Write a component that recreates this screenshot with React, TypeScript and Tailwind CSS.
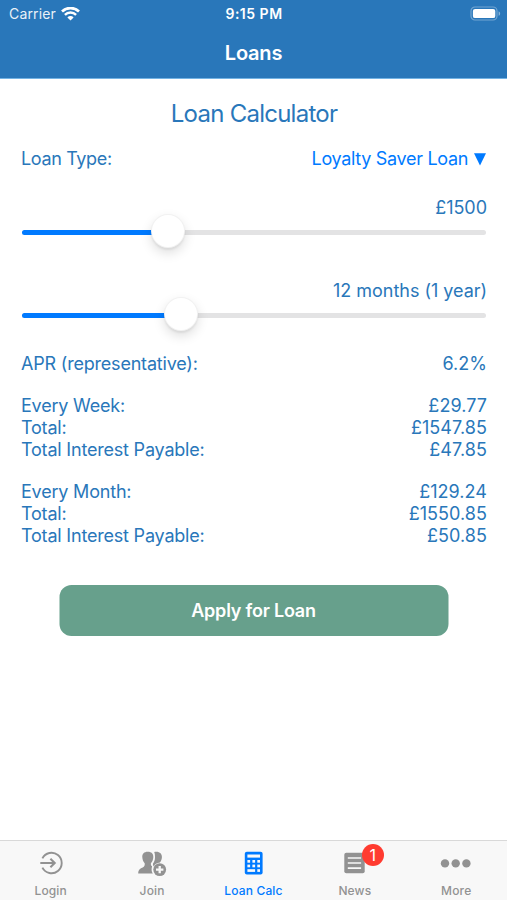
import * as React from 'react';

interface SliderProps {
    label: string;
    percent: number;
}

interface Row {
    label: string;
    value: string;
}

const weekly: Row[] = [
    { label: 'Every Week:', value: '£29.77' },
    { label: 'Total:', value: '£1547.85' },
    { label: 'Total Interest Payable:', value: '£47.85' },
];

const monthly: Row[] = [
    { label: 'Every Month:', value: '£129.24' },
    { label: 'Total:', value: '£1550.85' },
    { label: 'Total Interest Payable:', value: '£50.85' },
];

function WifiIcon() {
    return (
        <svg width="19" height="14" viewBox="0 0 19 14" fill="none" stroke="#fff">
            <path d="M1 4.5A12.2 12.2 0 0 1 18 4.5" strokeWidth="2.7" />
            <path d="M3.9 7.8A7.9 7.9 0 0 1 15.1 7.8" strokeWidth="2.4" />
            <path d="M9.5 13.5 6.4 10.4A4.4 4.4 0 0 1 12.6 10.4Z" fill="#fff" stroke="none" />
        </svg>
    );
}

function BatteryIcon() {
    return (
        <svg width="31" height="15" viewBox="0 0 31 15" fill="none">
            <rect x="1" y="1" width="26" height="13" rx="4" stroke="#fff" strokeOpacity="0.35" strokeWidth="1.2" />
            <rect x="2.9" y="2.9" width="22.4" height="9.2" rx="2.2" fill="#fff" />
            <path d="M28.6 5.2C30.6 6 30.6 9 28.6 9.8Z" fill="#fff" fillOpacity="0.45" />
        </svg>
    );
}

function LoginIcon() {
    return (
        <svg width="26" height="26" viewBox="0 0 26 26" fill="none" stroke="#929292" strokeWidth="1.9">
            <path d="M4.4 8.4A10.2 10.2 0 1 1 4.4 17.6" />
            <path d="M2.3 13H16.4M12.4 8.8 16.7 13 12.4 17.2" strokeWidth="2.1" />
        </svg>
    );
}

function JoinIcon() {
    return (
        <svg width="30" height="26" viewBox="0 0 30 26" fill="#929292">
            <path d="M17.2 2C22 1 25.3 3.3 24.9 7.6C24.7 9.7 24 11.4 22.9 12.6C19.8 12.8 17.8 14.3 16.9 16.4C16 15.7 15.8 14.9 16 13.6C17.3 11.8 18 9.8 18 7.5C18 5 17.9 3.5 17.2 2Z" />
            <path d="M10.8 1.8C14.6 1.8 16.5 4 16.3 7.3C16.1 10 15.3 11.8 13.9 13.2C13.8 15 14 15.6 15.1 16.2C14.2 19.4 14.5 21.5 15.8 23.6H1.2C1.2 20.3 2.3 18.7 5.7 17.4C7.5 16.7 7.9 15.3 7.7 13.2C6.3 11.8 5.5 10 5.3 7.3C5.1 4 7 1.8 10.8 1.8Z" />
            <circle cx="22.7" cy="19.6" r="6.4" />
            <path d="M22.7 15.9V23.3M19 19.6H26.4" stroke="#f8f8f8" strokeWidth="2.3" />
        </svg>
    );
}

function CalculatorIcon() {
    return (
        <svg width="20" height="26" viewBox="0 0 20 26">
            <rect x="1.8" y="1.8" width="17.8" height="22.6" rx="2" fill="#007aff" />
            <g fill="#f8f8f8">
                <rect x="4.4" y="4.5" width="12.6" height="3.1" />
                <rect x="4.4" y="10" width="2.7" height="2.7" />
                <rect x="9.4" y="10" width="2.7" height="2.7" />
                <rect x="14.3" y="10" width="2.7" height="2.7" />
                <rect x="4.4" y="14.6" width="2.7" height="2.7" />
                <rect x="9.4" y="14.6" width="2.7" height="2.7" />
                <rect x="14.3" y="14.6" width="2.7" height="2.7" />
                <rect x="4.4" y="19.2" width="7.7" height="2.7" />
                <rect x="14.3" y="19.2" width="2.7" height="2.7" />
            </g>
        </svg>
    );
}

function NewsIcon() {
    return (
        <svg width="22" height="26" viewBox="0 0 22 26">
            <rect x="0.3" y="2.8" width="20.4" height="20.4" rx="2" fill="#929292" />
            <path d="M3.8 8H17.1M3.8 13H17.1M3.8 18.2H17.1" stroke="#f8f8f8" strokeWidth="1.7" />
        </svg>
    );
}

function MoreIcon() {
    return (
        <svg width="32" height="26" viewBox="0 0 32 26" fill="#929292">
            <circle cx="5" cy="13.4" r="4.2" />
            <circle cx="15.7" cy="13.4" r="4.2" />
            <circle cx="26.4" cy="13.4" r="4.2" />
        </svg>
    );
}

function AmountSlider({ label, percent }: SliderProps) {
    return (
        <div className="h-[83px]">
            <p className="text-right leading-[22px] tracking-[-0.03px]">{label}</p>
            <div className="relative mx-px mt-[11px] h-[5px] rounded-full bg-[#e3e3e4]">
                <div className="h-full rounded-full bg-[#007aff]" style={{ width: `${percent}%` }} />
                <div
                    className="absolute -top-[16px] -ml-[17px] size-[34px] rounded-full border border-black/5 bg-white shadow-[0_5px_12px_rgba(0,0,0,0.13),0_2px_2px_rgba(0,0,0,0.06)]"
                    style={{ left: `${percent}%` }}
                />
            </div>
        </div>
    );
}

function Rows({ rows }: { rows: Row[] }) {
    return (
        <dl>
            {rows.map((row) => (
                <div key={row.label} className="flex justify-between leading-[22px]">
                    <dt>{row.label}</dt>
                    <dd className="tracking-[0.05px]">{row.value}</dd>
                </div>
            ))}
        </dl>
    );
}

const tabs = [
    { label: 'Login', icon: LoginIcon },
    { label: 'Join', icon: JoinIcon },
    { label: 'Loan Calc', icon: CalculatorIcon, active: true },
    { label: 'News', icon: NewsIcon, badge: 1 },
    { label: 'More', icon: MoreIcon },
];

export default function App() {
    return (
        <div className="flex h-[900px] w-[507px] flex-col overflow-hidden bg-white font-['Inter',sans-serif] text-[18px] tracking-[-0.2px] text-[#2977ba]">
            <header className="h-[79px] border-b border-[#73b3e4] bg-[#2977ba] text-white">
                <div className="grid h-[27px] grid-cols-3 items-center pl-[9px] pr-[6px] text-[14px] tracking-normal">
                    <div className="flex items-center gap-[5px]">
                        <span className="tracking-[0.15px] opacity-90">Carrier</span>
                        <WifiIcon />
                    </div>
                    <span className="pr-[2px] text-center font-semibold tracking-[0.5px]">9:15 PM</span>
                    <div className="flex justify-end">
                        <BatteryIcon />
                    </div>
                </div>
                <h1 className="text-center text-[20px] font-semibold leading-[52px]">Loans</h1>
            </header>

            <main className="flex-1 pl-[21px] pr-[20px] pt-[21px]">
                <h2 className="text-center text-[24px] leading-[28px] tracking-[-0.75px]">Loan Calculator</h2>
                <div className="mt-[20px] flex justify-between leading-[22px]">
                    <span className="tracking-[-0.35px]">Loan Type:</span>
                    <button className="flex items-center gap-[6px] text-[#007aff]">
                        <span className="tracking-[-0.32px]">Loyalty Saver Loan</span>
                        <svg width="13" height="13" viewBox="0 0 13 13" fill="currentColor">
                            <path d="M0 0.2H12L6 12.6Z" />
                        </svg>
                    </button>
                </div>

                <div className="mt-[27px]">
                    <AmountSlider label="£1500" percent={31.4} />
                    <AmountSlider label="12 months (1 year)" percent={34.3} />
                </div>

                <div className="mt-[-10px] space-y-[20px]">
                    <Rows rows={[{ label: 'APR (representative):', value: '6.2%' }]} />
                    <Rows rows={weekly} />
                    <Rows rows={monthly} />
                </div>

                <button className="mx-auto mt-[38px] block h-[51px] w-[389px] -translate-x-[0.5px] rounded-xl bg-[#67a08c] font-semibold text-white">
                    Apply for Loan
                </button>
            </main>

            <nav className="flex h-[60px] justify-around border-t border-[#d9d9d9] bg-[#f8f8f8]">
                {tabs.map((tab) => {
                    const Icon = tab.icon;
                    return (
                        <div
                            key={tab.label}
                            className={`flex w-[101px] flex-col items-center pt-[9px] text-[12px] tracking-[0.15px] font-medium ${tab.active ? 'text-[#007aff]' : 'text-[#929292]'}`}
                        >
                            <div className="relative">
                                <Icon />
                                {tab.badge && (
                                    <span className="absolute -top-[6px] left-[18px] flex size-[22px] items-center justify-center rounded-full bg-[#ff3b30] text-[16px] font-normal text-white">
                                        {tab.badge}
                                    </span>
                                )}
                            </div>
                            <span className="mt-[7px] leading-[16px]">{tab.label}</span>
                        </div>
                    );
                })}
            </nav>
        </div>
    );
}
